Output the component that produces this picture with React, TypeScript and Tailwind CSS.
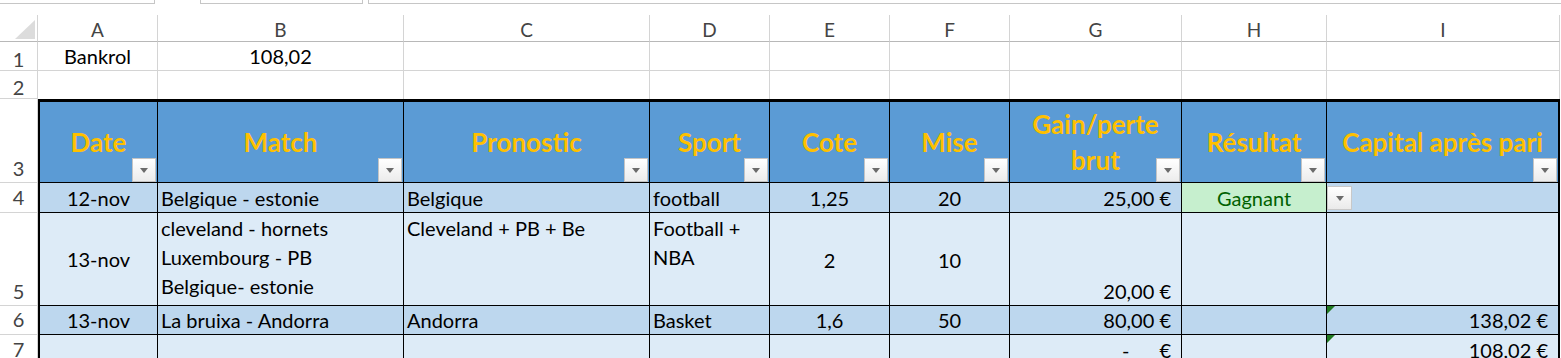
import React from 'react';

const grid = 'border-[#d4d4d4]';

function Filter() {
  return (
    <div className="absolute right-[1px] bottom-0 w-[24px] h-[24px] border border-[#c4c4c4] bg-linear-to-b from-white to-[#ececec] flex items-center justify-center">
      <div className="w-0 h-0 border-x-[4px] border-t-[5px] border-x-transparent border-t-[#6b6b6b] mt-[1px]" />
    </div>
  );
}

function ErrorMark() {
  return (
    <div className="absolute left-0 top-0 w-0 h-0 border-t-[8px] border-r-[8px] border-t-[#217a21] border-r-transparent" />
  );
}

function RowHead({ n, className = '' }: { n: number; className?: string }) {
  return (
    <div className={`border-r border-b ${grid} flex items-end justify-center pb-[1px] text-[#444] ${className}`}>
      {n}
    </div>
  );
}

const headers = ['Date', 'Match', 'Pronostic', 'Sport', 'Cote', 'Mise', 'Gain/perte brut', 'Résultat', 'Capital après pari'];

export default function App() {
  const cell = 'border-r border-b border-black relative';
  return (
    <div className="w-[1561px] h-[358px] overflow-hidden bg-white font-[Lato,sans-serif] text-[20px] leading-none text-black">
      {/* formula bar edges */}
      <div className="flex h-[15px] gap-[45px]">
        <div className="w-[155px] h-[4px] border-r border-b border-[#c6c6c6]" />
        <div className="flex gap-[5px] flex-1">
          <div className="w-[163px] h-[4px] border-x border-b border-[#c6c6c6]" />
          <div className="flex-1 h-[4px] border-l border-b border-[#c6c6c6]" />
        </div>
      </div>

      <div className="grid grid-cols-[38px_120px_246px_246px_120px_120px_120px_172px_145px_233px] grid-rows-[27px_29px_28px_84px_30px_93px_29px_29px]">
        {/* column letters */}
        <div className="border-r border-b border-[#d4d4d4] border-b-[#b8b8b8] relative">
          <div className="absolute left-[15px] top-[5px] w-0 h-0 border-b-[19px] border-l-[20px] border-b-[#dcdcdc] border-l-transparent" />
        </div>
        {['A', 'B', 'C', 'D', 'E', 'F', 'G', 'H', 'I'].map((l) => (
          <div key={l} className={`border-r border-b ${grid} border-b-[#b8b8b8] flex items-center justify-center pt-[3px] text-[#444] text-[19px]`}>
            {l}
          </div>
        ))}

        {/* row 1 */}
        <RowHead n={1} className="items-center pb-0" />
        <div className={`border-r border-b ${grid} flex items-center justify-center`}>Bankrol</div>
        <div className={`border-r border-b ${grid} flex items-center justify-center`}>108,02</div>
        {Array.from({ length: 7 }).map((_, i) => (
          <div key={i} className={`border-r border-b ${grid}`} />
        ))}

        {/* row 2 */}
        <RowHead n={2} className="items-center pb-0" />
        {Array.from({ length: 9 }).map((_, i) => (
          <div key={i} className={`border-r ${grid}`} />
        ))}

        {/* row 3 - headers */}
        <RowHead n={3} className="pb-[4px]" />
        {headers.map((h, i) => (
          <div
            key={h}
            className={`relative bg-[#5b9bd5] border-t-[3px] border-b border-black ${i === 0 ? 'border-l-2' : ''} ${i === 8 ? 'border-r-2' : 'border-r'} flex items-center justify-center text-center font-bold text-[26px] leading-[36px] text-[#ffc000] px-[6px]`}
          >
            <span className={i === 6 ? 'w-[135px]' : ''}>{h}</span>
            <Filter />
          </div>
        ))}

        {/* row 4 */}
        <RowHead n={4} className="pb-[5px]" />
        <div className={`${cell} border-l-2 bg-[#bdd7ee] flex items-center justify-center`}>12-nov</div>
        <div className={`${cell} bg-[#bdd7ee] flex items-center px-[3px]`}>Belgique - estonie</div>
        <div className={`${cell} bg-[#bdd7ee] flex items-center px-[3px]`}>Belgique</div>
        <div className={`${cell} bg-[#bdd7ee] flex items-center px-[3px]`}>football</div>
        <div className={`${cell} bg-[#bdd7ee] flex items-center justify-center`}>1,25</div>
        <div className={`${cell} bg-[#bdd7ee] flex items-center justify-center`}>20</div>
        <div className={`${cell} bg-[#bdd7ee] flex items-center justify-end pr-[10px]`}>25,00 €</div>
        <div className={`${cell} bg-[#c6efce] flex items-center justify-center text-[#006100]`}>Gagnant</div>
        <div className={`${cell} border-r-2 bg-[#bdd7ee]`}>
          <div className="absolute left-0 top-[3px] w-[25px] h-[24px] border border-[#c8c8c8] bg-linear-to-b from-white to-[#eaeaea] flex items-center justify-center">
            <div className="w-0 h-0 border-x-[4px] border-t-[5px] border-x-transparent border-t-[#6b6b6b]" />
          </div>
        </div>

        {/* row 5 */}
        <RowHead n={5} className="pb-[4px]" />
        <div className={`${cell} border-l-2 bg-[#ddebf7] flex items-center justify-center`}>13-nov</div>
        <div className={`${cell} bg-[#ddebf7] px-[3px] pt-[1px] leading-[29px]`}>
          <div>cleveland - hornets</div>
          <div>Luxembourg - PB</div>
          <div>Belgique- estonie</div>
        </div>
        <div className={`${cell} bg-[#ddebf7] px-[3px] pt-[1px] leading-[29px]`}>Cleveland + PB + Be</div>
        <div className={`${cell} bg-[#ddebf7] px-[3px] pt-[1px] leading-[29px]`}>
          <div>Football +</div>
          <div>NBA</div>
        </div>
        <div className={`${cell} bg-[#ddebf7] flex items-center justify-center pt-[2px]`}>2</div>
        <div className={`${cell} bg-[#ddebf7] flex items-center justify-center pt-[2px]`}>10</div>
        <div className={`${cell} bg-[#ddebf7] flex items-end justify-end pr-[10px] pb-[4px]`}>20,00 €</div>
        <div className={`${cell} bg-[#ddebf7]`} />
        <div className={`${cell} border-r-2 bg-[#ddebf7]`} />

        {/* row 6 */}
        <RowHead n={6} className="pb-[5px]" />
        <div className={`${cell} border-l-2 bg-[#bdd7ee] flex items-center justify-center`}>13-nov</div>
        <div className={`${cell} bg-[#bdd7ee] flex items-center px-[3px]`}>La bruixa - Andorra</div>
        <div className={`${cell} bg-[#bdd7ee] flex items-center px-[3px]`}>Andorra</div>
        <div className={`${cell} bg-[#bdd7ee] flex items-center px-[3px]`}>Basket</div>
        <div className={`${cell} bg-[#bdd7ee] flex items-center justify-center`}>1,6</div>
        <div className={`${cell} bg-[#bdd7ee] flex items-center justify-center`}>50</div>
        <div className={`${cell} bg-[#bdd7ee] flex items-center justify-end pr-[10px]`}>80,00 €</div>
        <div className={`${cell} bg-[#bdd7ee]`} />
        <div className={`${cell} border-r-2 bg-[#bdd7ee] flex items-center justify-end pr-[10px]`}>
          <ErrorMark />
          138,02 €
        </div>

        {/* row 7 */}
        <RowHead n={7} className="items-start pt-[4px] pb-0" />
        <div className={`${cell} border-l-2 bg-[#ddebf7]`} />
        <div className={`${cell} bg-[#ddebf7]`} />
        <div className={`${cell} bg-[#ddebf7]`} />
        <div className={`${cell} bg-[#ddebf7]`} />
        <div className={`${cell} bg-[#ddebf7]`} />
        <div className={`${cell} bg-[#ddebf7]`} />
        <div className={`${cell} bg-[#ddebf7] flex items-start pt-[5px] justify-end pr-[10px] gap-[30px]`}>
          <span>-</span>
          <span>€</span>
        </div>
        <div className={`${cell} bg-[#ddebf7]`} />
        <div className={`${cell} border-r-2 bg-[#ddebf7] flex items-start pt-[5px] justify-end pr-[10px]`}>
          <ErrorMark />
          108,02 €
        </div>
      </div>
    </div>
  );
}
